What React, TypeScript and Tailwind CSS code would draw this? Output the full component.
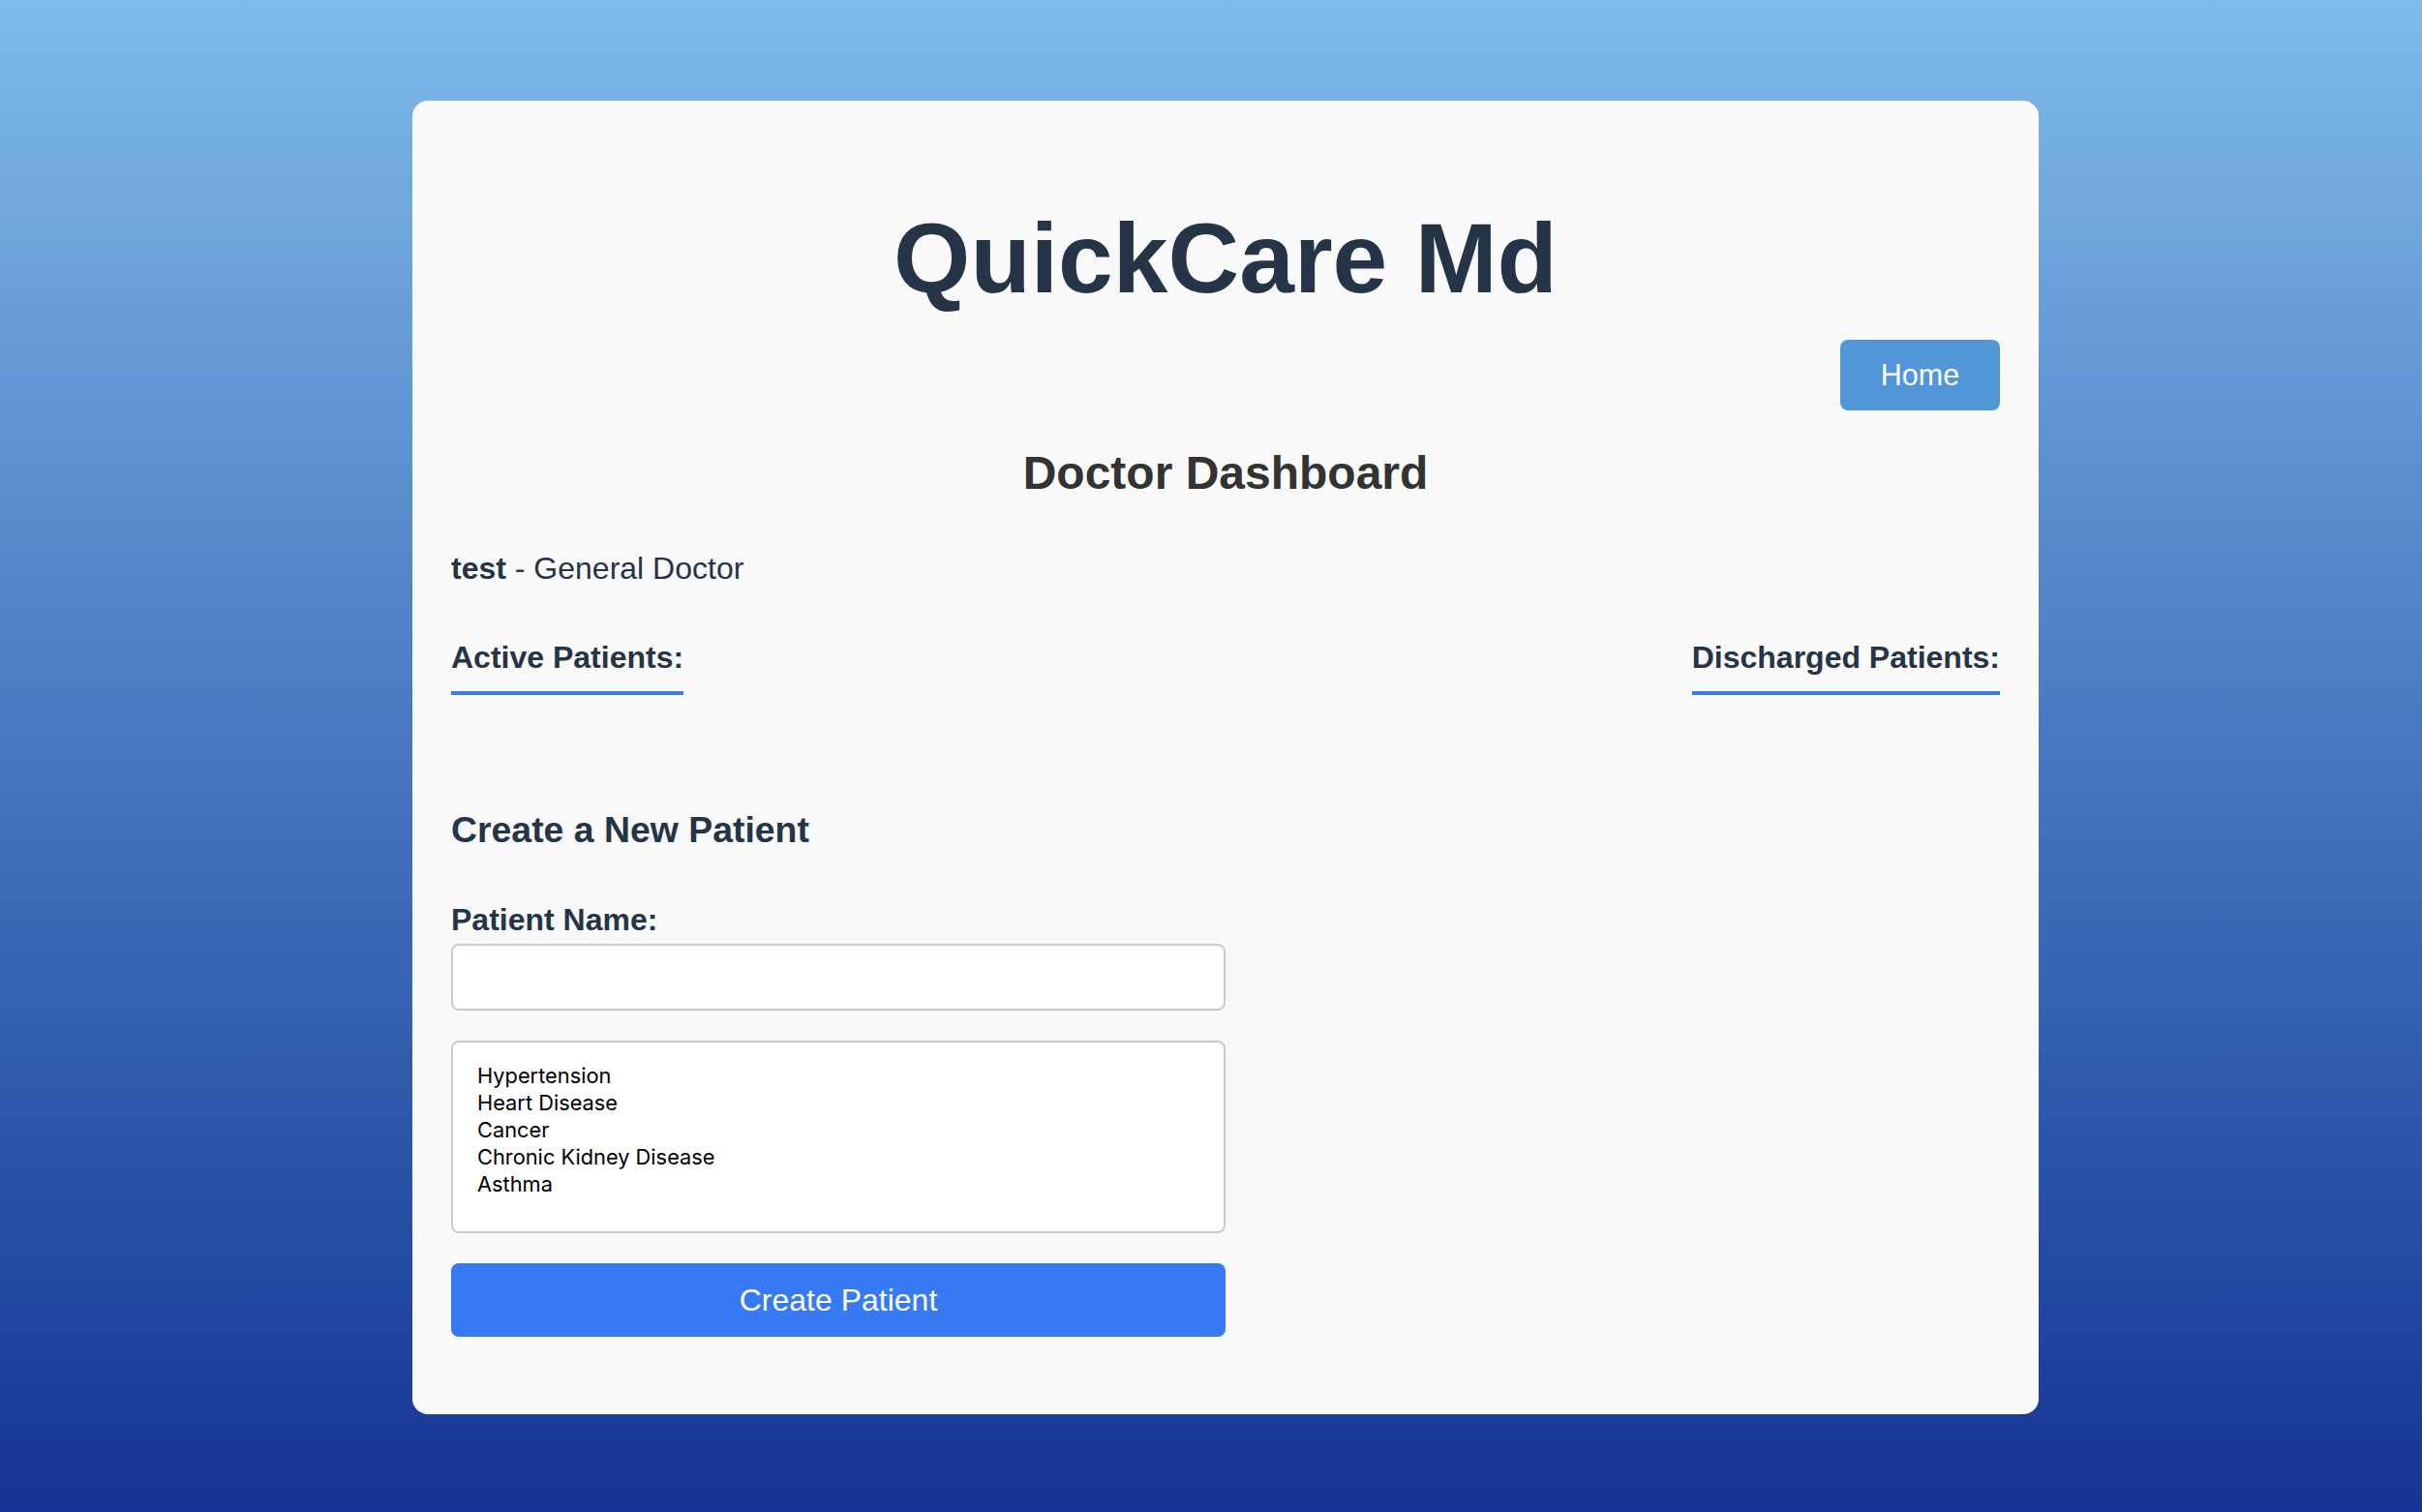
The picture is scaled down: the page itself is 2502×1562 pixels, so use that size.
import React from "react";

const conditions = [
  "Hypertension",
  "Heart Disease",
  "Cancer",
  "Chronic Kidney Disease",
  "Asthma",
];

export default function App() {
  return (
    <div className="min-h-screen w-full bg-gradient-to-b from-[#80baea] to-[#173393] pt-[104px] pb-[102px] font-['Liberation_Sans',Arial,sans-serif]">
      <div className="ml-[426px] w-[1680px] rounded-[16px] bg-[#f9f9f9] px-[40px] pt-[40px] pb-[80px]">
        <h1 className="mt-[65px] text-center text-[102px] leading-[117px] font-bold text-[#253446]">
          QuickCare Md
        </h1>

        <div className="mt-[25px] flex justify-end">
          <button
            type="button"
            className="h-[73px] w-[165px] rounded-[8px] bg-[#5197d7] text-[30.5px] text-white"
          >
            Home
          </button>
        </div>

        <h2 className="mt-[37px] text-center text-[48px] leading-[55px] font-bold text-[#333333]">
          Doctor Dashboard
        </h2>

        <p className="mt-[53px] text-[32px] leading-[37px] text-[#253446]">
          <span className="font-bold">test</span> - General Doctor
        </p>

        <div className="mt-[55px] flex items-start justify-between">
          <h3 className="border-b-[4px] border-[#3a7bf2] pb-[17px] text-[32px] leading-[36px] font-bold text-[#253446]">
            Active Patients:
          </h3>
          <h3 className="border-b-[4px] border-[#3a7bf2] pb-[17px] text-[32px] leading-[36px] font-bold text-[#253446]">
            Discharged Patients:
          </h3>
        </div>

        <h3 className="mt-[118px] text-[37.4px] leading-[42px] font-bold text-[#253446]">
          Create a New Patient
        </h3>

        <form className="mt-[54px] flex w-[800px] flex-col">
          <label className="text-[32px] leading-[36px] font-bold text-[#253446]">
            Patient Name:
          </label>
          <input
            type="text"
            className="mt-[7px] h-[69px] w-full rounded-[8px] border-2 border-[#cacaca] bg-white px-4 outline-none"
          />

          <div className="mt-[31px] h-[199px] w-full rounded-[8px] border-2 border-[#cacaca] bg-white pt-[20px] pl-[25px] font-['Inter',sans-serif] text-[21.8px] leading-[28px] text-black">
            {conditions.map((c) => (
              <div key={c}>{c}</div>
            ))}
          </div>

          <button
            type="button"
            className="mt-[31px] h-[76px] w-full rounded-[8px] bg-[#377af3] text-[32px] text-white"
          >
            Create Patient
          </button>
        </form>
      </div>
    </div>
  );
}
